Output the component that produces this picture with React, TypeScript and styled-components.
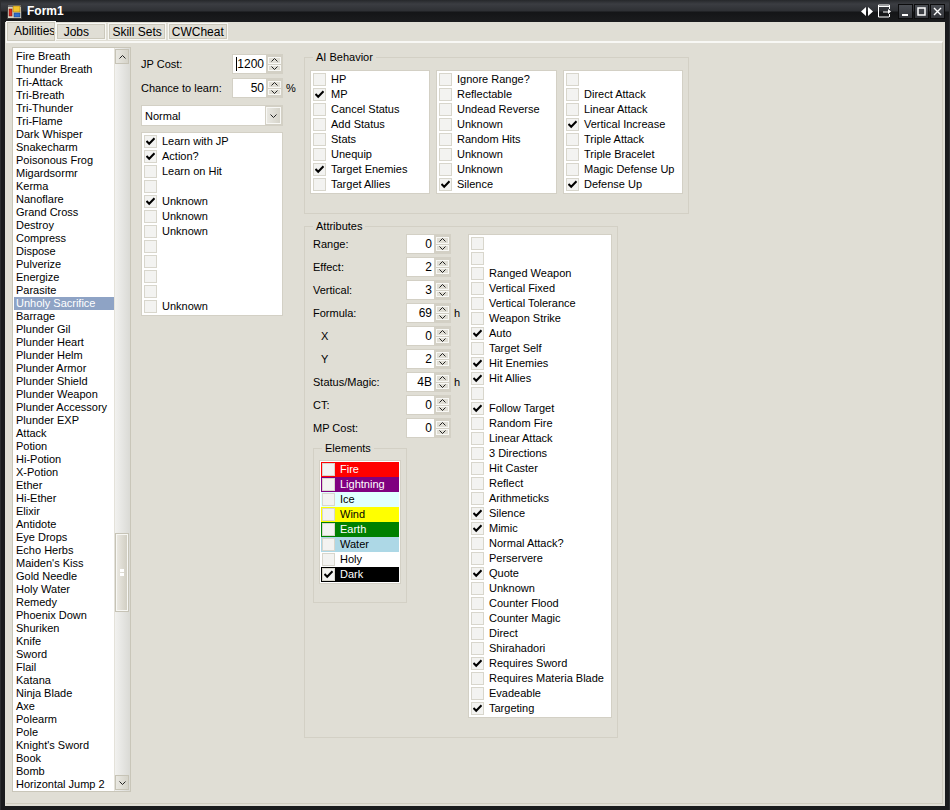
import React from "react";
import styled, { createGlobalStyle } from "styled-components";

const GlobalStyle = createGlobalStyle`
  html, body {
    margin: 0;
    padding: 0;
    background: #1a1b1d;
  }
  * {
    box-sizing: border-box;
  }
`;

const abilities = [
  "Fire Breath", "Thunder Breath", "Tri-Attack", "Tri-Breath", "Tri-Thunder", "Tri-Flame",
  "Dark Whisper", "Snakecharm", "Poisonous Frog", "Migardsormr", "Kerma", "Nanoflare",
  "Grand Cross", "Destroy", "Compress", "Dispose", "Pulverize", "Energize", "Parasite",
  "Unholy Sacrifice", "Barrage", "Plunder Gil", "Plunder Heart", "Plunder Helm",
  "Plunder Armor", "Plunder Shield", "Plunder Weapon", "Plunder Accessory", "Plunder EXP",
  "Attack", "Potion", "Hi-Potion", "X-Potion", "Ether", "Hi-Ether", "Elixir", "Antidote",
  "Eye Drops", "Echo Herbs", "Maiden's Kiss", "Gold Needle", "Holy Water", "Remedy",
  "Phoenix Down", "Shuriken", "Knife", "Sword", "Flail", "Katana", "Ninja Blade", "Axe",
  "Polearm", "Pole", "Knight's Sword", "Book", "Bomb", "Horizontal Jump 2",
];

// a trailing * marks a checked row
const learnFlags = [
  "Learn with JP*", "Action?*", "Learn on Hit", "", "Unknown*", "Unknown", "Unknown", "", "", "", "", "Unknown",
];
const aiFlags = [
  ["HP", "MP*", "Cancel Status", "Add Status", "Stats", "Unequip", "Target Enemies*", "Target Allies"],
  ["Ignore Range?", "Reflectable", "Undead Reverse", "Unknown", "Random Hits", "Unknown", "Unknown", "Silence*"],
  ["", "Direct Attack", "Linear Attack", "Vertical Increase*", "Triple Attack", "Triple Bracelet", "Magic Defense Up", "Defense Up*"],
];
const attributeFlags = [
  "", "", "Ranged Weapon", "Vertical Fixed", "Vertical Tolerance", "Weapon Strike", "Auto*", "Target Self",
  "Hit Enemies*", "Hit Allies*", "", "Follow Target*", "Random Fire", "Linear Attack", "3 Directions", "Hit Caster",
  "Reflect", "Arithmeticks", "Silence*", "Mimic*", "Normal Attack?", "Perservere", "Quote*", "Unknown",
  "Counter Flood", "Counter Magic", "Direct", "Shirahadori", "Requires Sword*", "Requires Materia Blade", "Evadeable", "Targeting*",
];
const attributeFields = [
  { label: "Range:", value: "0" },
  { label: "Effect:", value: "2" },
  { label: "Vertical:", value: "3" },
  { label: "Formula:", value: "69", unit: "h" },
  { label: "X", value: "0", indent: true },
  { label: "Y", value: "2", indent: true },
  { label: "Status/Magic:", value: "4B", unit: "h" },
  { label: "CT:", value: "0" },
  { label: "MP Cost:", value: "0" },
];
const elements = [
  { name: "Fire", bg: "#ff0000", fg: "#fff" },
  { name: "Lightning", bg: "#800080", fg: "#fff" },
  { name: "Ice", bg: "#e0ffff", fg: "#000" },
  { name: "Wind", bg: "#ffff00", fg: "#000" },
  { name: "Earth", bg: "#008000", fg: "#fff" },
  { name: "Water", bg: "#add8e6", fg: "#000" },
  { name: "Holy", bg: "#ffffff", fg: "#000" },
  { name: "Dark*", bg: "#000000", fg: "#fff" },
];

const Window = styled.div`
  width: 950px;
  height: 810px;
  display: flex;
  flex-direction: column;
  padding: 0 4px 4px;
  overflow: hidden;
  background: #1a1b1d;
  border-left: 1px solid #2c2d30;
  border-right: 1px solid #2c2d30;
  font-family: "Liberation Sans", Arial, sans-serif;
  font-size: 11px;
  color: #000;
`;

const TitleBar = styled.div`
  height: 22px;
  margin: 0 -5px;
  padding: 0 5px 0 7px;
  flex: none;
  display: flex;
  align-items: center;
  background: linear-gradient(#26282b 0, #3b3d42 4px, #2e3034 11px, #141517 12px, #1b1c1e 22px);
`;

const Title = styled.span`
  margin-left: 5px;
  color: #fff;
  font-size: 12px;
  font-weight: bold;
`;

const TitleTools = styled.div`
  margin-left: auto;
  display: flex;
  align-items: center;
`;

const CaptionButton = styled.div`
  width: 15px;
  height: 15px;
  margin-left: 1px;
  display: flex;
  align-items: center;
  justify-content: center;
  background: linear-gradient(#4a4d53, #33353a);
  border: 1px solid #0c0c0d;
`;

const Client = styled.div`
  flex: 1;
  min-height: 0;
  display: flex;
  flex-direction: column;
  background: #e0ded5;
`;

const TabStrip = styled.div`
  height: 20px;
  flex: none;
  display: flex;
  align-items: flex-end;
  padding-left: 1px;
  position: relative;
  z-index: 1;
  margin-bottom: -1px;
`;

const Tab = styled.div<{ $active?: boolean }>`
  height: ${({ $active }) => ($active ? 21 : 17)}px;
  width: ${({ $active }) => ($active ? 50 : "auto")};
  margin-right: ${({ $active }) => ($active ? 0 : 2)}px;
  margin-bottom: ${({ $active }) => ($active ? 0 : 2)}px;
  padding: ${({ $active }) => ($active ? "2px 0 0 7px" : "1px 3px 0")};
  background: #e0ded5;
  border: 1px solid #f8f8f5;
  outline: 1px solid #cbc8bb;
  outline-offset: -2px;
  line-height: 14px;
  font-size: ${({ $active }) => ($active ? 12 : 12)}px;
  white-space: nowrap;
`;

const TabPage = styled.div`
  flex: 1;
  min-height: 0;
  margin: 0 2px 2px 1px;
  padding: 4px 0 0 6px;
  display: flex;
  align-items: flex-start;
  border-top: 2px solid #f8f8f5;
  border-right: 1px solid #cfccbf;
  border-bottom: 1px solid #cfccbf;
`;

const ListBox = styled.div`
  width: 119px;
  height: 745px;
  flex: none;
  display: flex;
  background: #fff;
  border: 1px solid #c9c6b9;
`;

const ListItems = styled.div`
  flex: 1;
  min-width: 0;
  padding: 2px 0 0 1px;
`;

const ListItem = styled.div<{ $selected?: boolean }>`
  height: 13px;
  padding-left: 2px;
  line-height: 13px;
  white-space: nowrap;
  background: ${({ $selected }) => ($selected ? "#8ea3c5" : "transparent")};
  color: ${({ $selected }) => ($selected ? "#fff" : "#000")};
`;

const ScrollBar = styled.div`
  width: 16px;
  flex: none;
  display: flex;
  flex-direction: column;
  padding-bottom: 1px;
  background: linear-gradient(to right, #f1f1ef, #dadad5);
  border-left: 1px solid #e4e2da;
`;

const ScrollButton = styled.div`
  width: 14px;
  height: 15px;
  margin-top: 1px;
  flex: none;
  display: flex;
  align-items: center;
  justify-content: center;
  background: linear-gradient(to right, #e9e8e2, #d5d3c9);
  border: 1px solid #f7f7f4;
  outline: 1px solid #c6c3b6;
  outline-offset: -1px;
`;

const ScrollThumb = styled.div`
  width: 14px;
  height: 79px;
  margin-top: 469px;
  flex: none;
  display: flex;
  align-items: center;
  justify-content: center;
  background: linear-gradient(to right, #eceae4, #cfccc0);
  border: 1px solid #c6c3b6;
  box-shadow: inset 0 0 0 1px #f7f7f4;
`;

const ScrollSpacer = styled.div`
  flex: 1;
`;

const LeftColumn = styled.div`
  width: 142px;
  flex: none;
  margin-left: 10px;
  padding-top: 7px;
  display: flex;
  flex-direction: column;
`;

const CostRow = styled.div`
  height: 20px;
  margin-bottom: 4px;
  display: flex;
  align-items: center;
  position: relative;
`;

const CostLabel = styled.span`
  width: 91px;
  flex: none;
  white-space: nowrap;
`;

const Unit = styled.span`
  position: absolute;
  left: 100%;
  margin-left: 3px;
`;

const SpinnerBox = styled.div<{ $width: number }>`
  width: ${({ $width }) => $width}px;
  height: 20px;
  flex: none;
  display: flex;
  background: #d3d0c5;
  padding: 1px;
`;

const SpinnerValue = styled.div`
  flex: 1;
  min-width: 0;
  padding-right: 2px;
  display: flex;
  align-items: center;
  justify-content: flex-end;
  background: #fff;
  font-size: 12px;
`;

const Caret = styled.span`
  width: 1px;
  height: 14px;
  margin-right: 0;
  background: #000;
`;

const Steppers = styled.div`
  width: 16px;
  flex: none;
  padding: 2px 1px 2px 2px;
  display: flex;
  flex-direction: column;
  gap: 1px;
`;

const StepButton = styled.div`
  flex: 1;
  display: flex;
  align-items: center;
  justify-content: center;
  background: #e0ded5;
  border: 1px solid #f8f8f5;
`;

const Combo = styled.div`
  height: 21px;
  margin: 3px 0 6px;
  display: flex;
  background: #d3d0c5;
  padding: 1px;
`;

const ComboValue = styled.div`
  flex: 1;
  padding-left: 3px;
  display: flex;
  align-items: center;
  background: #fff;
`;

const ComboButton = styled.div`
  width: 15px;
  margin: 1px 1px 1px 1px;
  display: flex;
  align-items: center;
  justify-content: center;
  background: linear-gradient(to right, #e9e8e2, #d5d3c9);
  border: 1px solid #f8f8f5;
`;

const CheckList = styled.div<{ $width: number }>`
  width: ${({ $width }) => $width}px;
  flex: none;
  padding: 1px;
  background: #fff;
  border: 1px solid #d3d0c5;
`;

const CheckRow = styled.div<{ $bg?: string; $fg?: string }>`
  height: 15px;
  padding-left: 1px;
  display: flex;
  align-items: center;
  gap: 5px;
  line-height: 15px;
  white-space: nowrap;
  background: ${({ $bg }) => $bg ?? "transparent"};
  color: ${({ $fg }) => $fg ?? "#000"};
`;

const Box = styled.span`
  width: 13px;
  height: 13px;
  flex: none;
  display: flex;
  align-items: center;
  justify-content: center;
  background: #f3f3f1;
  border: 1px solid #d8d6cc;
`;

const RightColumn = styled.div`
  margin-left: 21px;
  padding-top: 4px;
  display: flex;
  flex-direction: column;
`;

const Group = styled.fieldset<{ $width: number }>`
  width: ${({ $width }) => $width}px;
  margin: 0;
  padding: 0;
  flex: none;
  border: 1px solid #d3d0c5;
  display: block;
  min-width: 0;
`;

const Legend = styled.legend`
  margin-left: 8px;
  padding: 0 3px;
  line-height: 13px;
`;

const AiLists = styled.div`
  padding: 6px 5px 19px;
  display: flex;
  gap: 6px;
`;

const AttributesGroup = styled(Group)`
  margin-top: 6px;
`;

const AttributesBody = styled.div`
  padding: 1px 5px 19px 8px;
  display: flex;
  align-items: flex-start;
`;

const FieldColumn = styled.div`
  width: 155px;
  flex: none;
  display: flex;
  flex-direction: column;
`;

const FieldRow = styled.div`
  height: 20px;
  margin-bottom: 3px;
  display: flex;
  align-items: center;
  position: relative;
  width: 138px;
`;

const FieldLabel = styled.span<{ $indent?: boolean }>`
  width: 93px;
  padding-left: ${({ $indent }) => ($indent ? 8 : 0)}px;
  flex: none;
  white-space: nowrap;
`;

const ElementsGroup = styled(Group)`
  margin-top: 1px;
`;

const ElementsBody = styled.div`
  padding: 5px 5px 18px;
`;

const Chevron = ({ up, size = 7 }: { up?: boolean; size?: number }) => (
  <svg width={size} height={4} viewBox="0 0 7 4" style={{ display: "block" }}>
    <path
      d={up ? "M0.5 3.5 L3.5 0.5 L6.5 3.5" : "M0.5 0.5 L3.5 3.5 L6.5 0.5"}
      fill="none"
      stroke="#222"
      strokeWidth="1"
    />
  </svg>
);

const Check = () => (
  <svg width="9" height="9" viewBox="0 0 9 9" style={{ display: "block" }}>
    <path d="M0.5 4 L3.2 6.8 L8.5 1.2" fill="none" stroke="#000" strokeWidth="2" />
  </svg>
);

const Spinner = ({ value, width, caret }: { value: string; width: number; caret?: boolean }) => (
  <SpinnerBox $width={width}>
    <SpinnerValue>
      {caret && <Caret />}
      {value}
    </SpinnerValue>
    <Steppers>
      <StepButton>
        <Chevron up />
      </StepButton>
      <StepButton>
        <Chevron />
      </StepButton>
    </Steppers>
  </SpinnerBox>
);

const Flag = ({ text, bg, fg }: { text: string; bg?: string; fg?: string }) => {
  const checked = text.endsWith("*");
  return (
    <CheckRow $bg={bg} $fg={fg}>
      <Box>{checked && <Check />}</Box>
      {checked ? text.slice(0, -1) : text}
    </CheckRow>
  );
};

const FlagList = ({ flags, width }: { flags: string[]; width: number }) => (
  <CheckList $width={width}>
    {flags.map((f, i) => (
      <Flag key={i} text={f} />
    ))}
  </CheckList>
);

const AppIcon = () => (
  <svg width="15" height="15" viewBox="0 0 15 15" style={{ display: "block" }}>
    <rect x="0.5" y="0.5" width="14" height="14" fill="#d8d4c4" stroke="#3a3a3a" />
    <rect x="1" y="1" width="13" height="2" fill="#6b6b70" />
    <rect x="2" y="5" width="3" height="7" fill="#d8261c" stroke="#6b1410" strokeWidth="0.5" />
    <rect x="6" y="2" width="7" height="6" fill="#f3c32c" stroke="#8a6a10" strokeWidth="0.5" />
    <rect x="7" y="9" width="6" height="4" fill="#2f6fd0" stroke="#173a70" strokeWidth="0.5" />
  </svg>
);

export default function App() {
  return (
    <Window>
      <GlobalStyle />
      <TitleBar>
        <AppIcon />
        <Title>Form1</Title>
        <TitleTools>
          <svg width="12" height="9" viewBox="0 0 12 9" style={{ display: "block", marginRight: 5 }}>
            <path d="M5 0 V9 L0 4.5 Z M7 0 V9 L12 4.5 Z" fill="#fff" />
          </svg>
          <svg width="13" height="14" viewBox="0 0 13 14" style={{ display: "block", marginRight: 6 }}>
            <path d="M0.5 1 H11.5 M0.5 2.5 H11.5 M0.5 1 V13 H11 M11.5 1 V5 M11.5 10 V13" fill="none" stroke="#fff" />
            <path d="M5 7.5 H10 V5 L13 7.5 L10 10 V8.5 H5 Z" fill="#fff" />
          </svg>
          <CaptionButton>
            <svg width="9" height="9" viewBox="0 0 9 9" style={{ display: "block" }}>
              <rect x="1" y="7" width="6" height="2" fill="#fff" />
            </svg>
          </CaptionButton>
          <CaptionButton>
            <svg width="9" height="9" viewBox="0 0 9 9" style={{ display: "block" }}>
              <rect x="1" y="1" width="7" height="7" fill="none" stroke="#fff" strokeWidth="1.5" />
            </svg>
          </CaptionButton>
          <CaptionButton>
            <svg width="9" height="9" viewBox="0 0 9 9" style={{ display: "block" }}>
              <path d="M1 1 L8 8 M8 1 L1 8" stroke="#fff" strokeWidth="1.4" />
            </svg>
          </CaptionButton>
        </TitleTools>
      </TitleBar>
      <Client>
        <TabStrip>
          <Tab $active>Abilities</Tab>
          <Tab>&nbsp;Jobs&nbsp;&nbsp;&nbsp;&nbsp;</Tab>
          <Tab>Skill Sets</Tab>
          <Tab>CWCheat</Tab>
        </TabStrip>
        <TabPage>
          <ListBox>
            <ListItems>
              {abilities.map((a) => (
                <ListItem key={a} $selected={a === "Unholy Sacrifice"}>
                  {a}
                </ListItem>
              ))}
            </ListItems>
            <ScrollBar>
              <ScrollButton>
                <Chevron up />
              </ScrollButton>
              <ScrollThumb>
                <svg width="4" height="7" viewBox="0 0 4 7" style={{ display: "block" }}>
                  <path d="M0 0 H4 V3 H0 Z M0 4 H4 V7 H0 Z" fill="#fff" />
                </svg>
              </ScrollThumb>
              <ScrollSpacer />
              <ScrollButton>
                <Chevron />
              </ScrollButton>
            </ScrollBar>
          </ListBox>

          <LeftColumn>
            <CostRow>
              <CostLabel>JP Cost:</CostLabel>
              <Spinner value="1200" width={51} caret />
            </CostRow>
            <CostRow>
              <CostLabel>Chance to learn:</CostLabel>
              <Spinner value="50" width={51} />
              <Unit>%</Unit>
            </CostRow>
            <Combo>
              <ComboValue>Normal</ComboValue>
              <ComboButton>
                <Chevron />
              </ComboButton>
            </Combo>
            <FlagList flags={learnFlags} width={142} />
          </LeftColumn>

          <RightColumn>
            <Group $width={385}>
              <Legend>AI Behavior</Legend>
              <AiLists>
                <FlagList flags={aiFlags[0]} width={120} />
                <FlagList flags={aiFlags[1]} width={121} />
                <FlagList flags={aiFlags[2]} width={120} />
              </AiLists>
            </Group>
            <AttributesGroup $width={314}>
              <Legend>Attributes</Legend>
              <AttributesBody>
                <FieldColumn>
                  {attributeFields.map((f) => (
                    <FieldRow key={f.label}>
                      <FieldLabel $indent={f.indent}>{f.label}</FieldLabel>
                      <Spinner value={f.value} width={45} />
                      {f.unit && <Unit>{f.unit}</Unit>}
                    </FieldRow>
                  ))}
                  <ElementsGroup $width={94}>
                    <Legend>Elements</Legend>
                    <ElementsBody>
                      <CheckList $width={82}>
                        {elements.map((e) => (
                          <Flag key={e.name} text={e.name} bg={e.bg} fg={e.fg} />
                        ))}
                      </CheckList>
                    </ElementsBody>
                  </ElementsGroup>
                </FieldColumn>
                <FlagList flags={attributeFlags} width={144} />
              </AttributesBody>
            </AttributesGroup>
          </RightColumn>
        </TabPage>
      </Client>
    </Window>
  );
}
